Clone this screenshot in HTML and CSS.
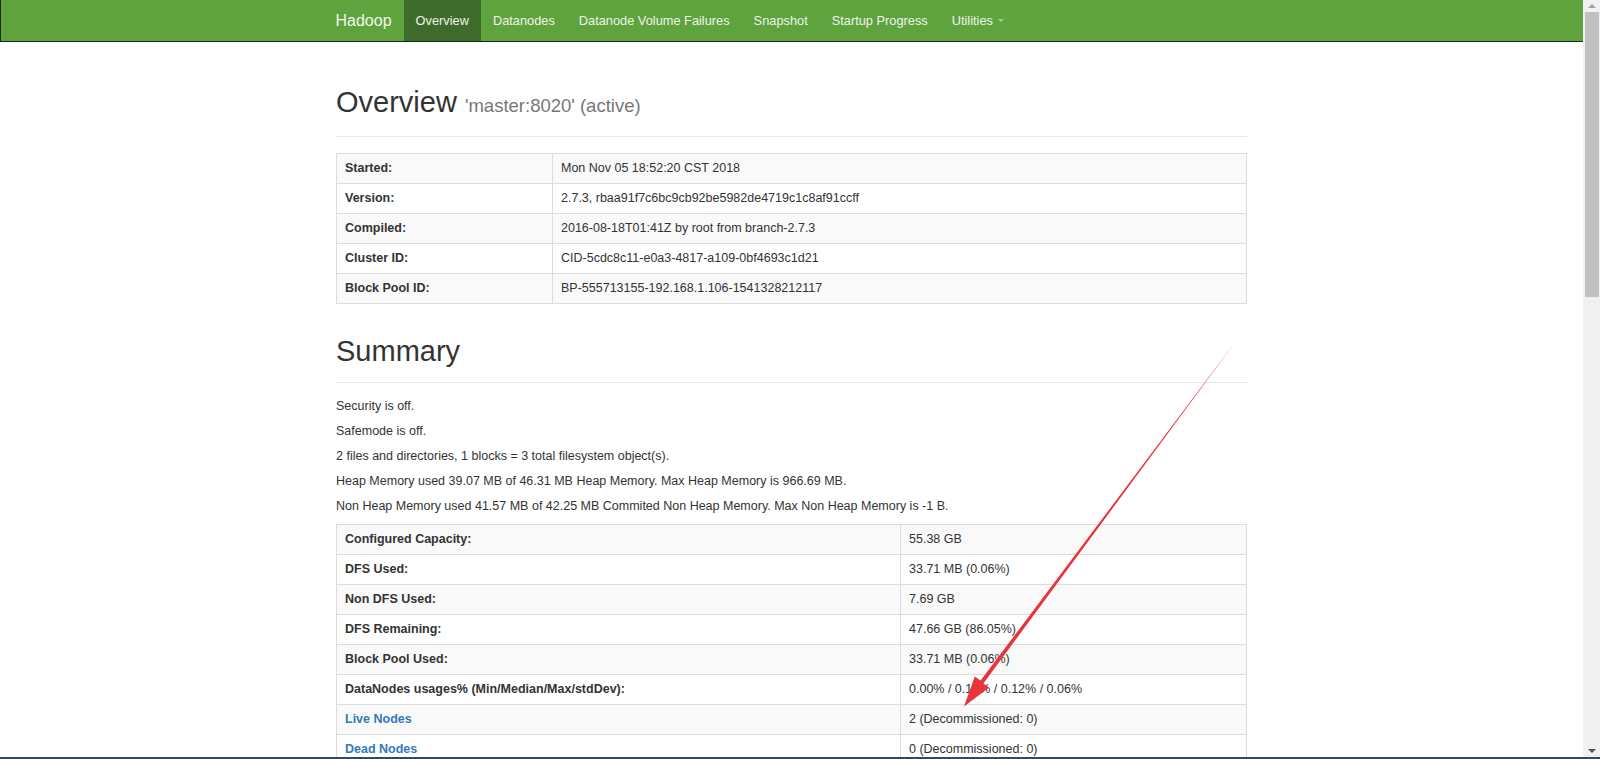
FILE: index.html
```html
<!DOCTYPE html>
<html lang="en">
<head>
<meta charset="utf-8">
<title>Namenode information</title>
<link rel="stylesheet" href="styles.css">
</head>
<body>
<div class="screen">
  <div class="viewport">
    <nav class="navbar">
      <div class="nav-inner">
        <a class="brand" href="#">Hadoop</a>
        <ul class="nav">
          <li class="active"><a href="#">Overview</a></li>
          <li><a href="#">Datanodes</a></li>
          <li><a href="#">Datanode Volume Failures</a></li>
          <li><a href="#">Snapshot</a></li>
          <li><a href="#">Startup Progress</a></li>
          <li><a href="#">Utilities <span class="caret"></span></a></li>
        </ul>
      </div>
    </nav>

    <main class="container">
      <div class="page-header first">
        <h1>Overview <small>'master:8020' (active)</small></h1>
      </div>
      <table class="table t-overview">
        <colgroup><col class="c1"><col></colgroup>
        <tr><th>Started:</th><td>Mon Nov 05 18:52:20 CST 2018</td></tr>
        <tr><th>Version:</th><td>2.7.3, rbaa91f7c6bc9cb92be5982de4719c1c8af91ccff</td></tr>
        <tr><th>Compiled:</th><td>2016-08-18T01:41Z by root from branch-2.7.3</td></tr>
        <tr><th>Cluster ID:</th><td>CID-5cdc8c11-e0a3-4817-a109-0bf4693c1d21</td></tr>
        <tr><th>Block Pool ID:</th><td>BP-555713155-192.168.1.106-1541328212117</td></tr>
      </table>

      <div class="page-header second">
        <h1>Summary</h1>
      </div>
      <p>Security is off.</p>
      <p>Safemode is off.</p>
      <p>2 files and directories, 1 blocks = 3 total filesystem object(s).</p>
      <p>Heap Memory used 39.07 MB of 46.31 MB Heap Memory. Max Heap Memory is 966.69 MB.</p>
      <p>Non Heap Memory used 41.57 MB of 42.25 MB Commited Non Heap Memory. Max Non Heap Memory is -1 B.</p>
      <table class="table t-summary">
        <colgroup><col class="c2"><col></colgroup>
        <tr><th>Configured Capacity:</th><td>55.38 GB</td></tr>
        <tr><th>DFS Used:</th><td>33.71 MB (0.06%)</td></tr>
        <tr><th>Non DFS Used:</th><td>7.69 GB</td></tr>
        <tr><th>DFS Remaining:</th><td>47.66 GB (86.05%)</td></tr>
        <tr><th>Block Pool Used:</th><td>33.71 MB (0.06%)</td></tr>
        <tr><th>DataNodes usages% (Min/Median/Max/stdDev):</th><td>0.00% / 0.12% / 0.12% / 0.06%</td></tr>
        <tr><th><a href="#">Live Nodes</a></th><td>2 (Decommissioned: 0)</td></tr>
        <tr><th><a href="#">Dead Nodes</a></th><td>0 (Decommissioned: 0)</td></tr>
      </table>
    </main>

    <svg class="annotation" width="1583" height="757" viewBox="0 0 1583 757">
      <polygon fill="#e8343b" points="1233.4,344.6 1232.6,345.4 980.6,680.6 974.8,676.6 964,706.5 989.2,687.4 983.4,683.4"/>
    </svg>
  </div>
  <div class="scrollbar">
    <div class="sb-btn"><span class="arrow-up"></span></div>
    <div class="sb-track"><div class="sb-thumb"></div></div>
    <div class="sb-btn"><span class="arrow-down"></span></div>
  </div>
</div>
<div class="taskbar"></div>
</body>
</html>
```

FILE: styles.css
```css
html, body {
  margin: 0;
  padding: 0;
  background: #fff;
}
body {
  font-family: "Liberation Sans", Arial, sans-serif;
  font-size: 12.5px;
  color: #333;
  overflow: hidden;
  height: 759px;
}
.screen {
  display: flex;
  height: 757px;
  overflow: hidden;
}
.viewport {
  flex: 1;
  position: relative;
  overflow: hidden;
}
.taskbar {
  height: 2px;
  background: #34495e;
}

/* navbar */
.navbar {
  background: #5fa33e;
  border-bottom: 1px solid #1c2a14;
  border-left: 1px solid #1c2a14;
  box-sizing: border-box;
  height: 42px;
}
.nav-inner {
  width: 911px;
  margin: 0 auto;
  display: flex;
  height: 41px;
  align-items: stretch;
}
.brand {
  display: flex;
  align-items: center;
  padding-right: 12px;
  font-size: 16px;
  color: #f2f7ee;
  text-decoration: none;
  margin-left: -1px;
}
.nav {
  display: flex;
  list-style: none;
  margin: 0;
  padding: 0;
}
.nav li {
  display: flex;
}
.nav a {
  display: flex;
  align-items: center;
  padding: 0 12px;
  font-size: 12.8px;
  color: #eef4ea;
  text-decoration: none;
}
.nav li.active a {
  background: #3e6b2b;
}
.caret {
  display: inline-block;
  width: 0;
  height: 0;
  margin-left: 5px;
  border-top: 3px solid rgba(255,255,255,0.45);
  border-left: 3px solid transparent;
  border-right: 3px solid transparent;
}

/* content */
.container {
  width: 911px;
  margin: 0 auto;
}
.page-header {
  border-bottom: 1px solid #e8e8e8;
  padding-bottom: 15px;
}
.page-header.first {
  margin-top: 45px;
  margin-bottom: 16px;
}
.page-header.second {
  margin-top: 32px;
  margin-bottom: 16px;
}
h1 {
  margin: 0;
  font-family: "Liberation Sans", Arial, sans-serif;
  font-weight: normal;
  font-size: 29px;
  line-height: 31px;
  color: #333;
}
h1 small {
  font-size: 18.5px;
  color: #777;
}
p {
  margin: 0 0 10px;
  line-height: 15px;
}

.table {
  width: 100%;
  border-collapse: collapse;
  border: 1px solid #dcdcdc;
}
.table th, .table td {
  padding: 8px;
  line-height: 13px;
  border: 1px solid #dcdcdc;
  text-align: left;
  vertical-align: middle;
}
.table th {
  font-weight: bold;
}
.table tr:nth-child(odd) {
  background: #f9f9f9;
}
col.c1 { width: 216px; }
col.c2 { width: 564px; }
.table a {
  color: #337ab7;
  text-decoration: none;
}

.annotation {
  position: absolute;
  left: 0;
  top: 0;
  pointer-events: none;
}

/* scrollbar */
.scrollbar {
  width: 17px;
  background: #f0f0f0;
  display: flex;
  flex-direction: column;
}
.sb-btn {
  height: 12px;
  display: flex;
  align-items: center;
  justify-content: center;
}
.arrow-up {
  width: 0; height: 0;
  border-left: 4px solid transparent;
  border-right: 4px solid transparent;
  border-bottom: 4px solid #a3a3a3;
}
.arrow-down {
  width: 0; height: 0;
  border-left: 4px solid transparent;
  border-right: 4px solid transparent;
  border-top: 4px solid #505050;
}
.sb-track {
  flex: 1;
  padding: 0 1px 0 2px;
}
.sb-thumb {
  height: 285px;
  background: #c1c1c1;
}
```
